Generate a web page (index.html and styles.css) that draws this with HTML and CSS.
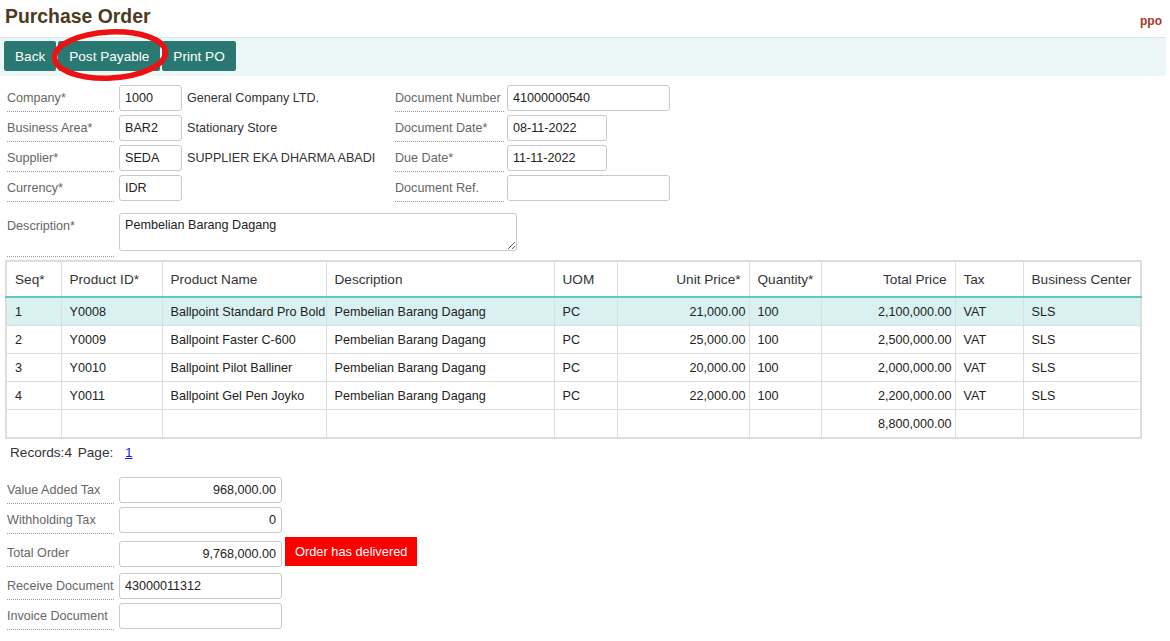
FILE: index.html
```html
<!DOCTYPE html>
<html>
<head>
<meta charset="utf-8">
<title>Purchase Order</title>
<link rel="stylesheet" href="styles.css">
</head>
<body>
<header class="page-head">
  <h1 class="title">Purchase Order</h1>
  <span class="user">ppo</span>
</header>

<div class="toolbar">
  <button class="btn">Back</button>
  <button class="btn">Post Payable</button>
  <button class="btn">Print PO</button>
  <svg class="mark" width="120" height="52" viewBox="0 0 120 52" aria-hidden="true">
    <ellipse cx="60" cy="26" rx="55.5" ry="23" fill="none" stroke="#ee1111" stroke-width="5.5" transform="rotate(-3 60 26)"/>
  </svg>
</div>

<section class="head-form">
  <div class="cols">
    <div class="col col-left">
      <div class="row"><label class="lbl">Company*</label><input class="inp w-code" value="1000" readonly><span class="desc">General Company LTD.</span></div>
      <div class="row"><label class="lbl">Business Area*</label><input class="inp w-code" value="BAR2" readonly><span class="desc">Stationary Store</span></div>
      <div class="row"><label class="lbl">Supplier*</label><input class="inp w-code" value="SEDA" readonly><span class="desc">SUPPLIER EKA DHARMA ABADI</span></div>
      <div class="row"><label class="lbl">Currency*</label><input class="inp w-code" value="IDR" readonly></div>
    </div>
    <div class="col col-right">
      <div class="row"><label class="lbl lbl-r">Document Number</label><input class="inp w-long" value="41000000540" readonly></div>
      <div class="row"><label class="lbl lbl-r">Document Date*</label><input class="inp w-date" value="08-11-2022" readonly></div>
      <div class="row"><label class="lbl lbl-r">Due Date*</label><input class="inp w-date" value="11-11-2022" readonly></div>
      <div class="row"><label class="lbl lbl-r">Document Ref.</label><input class="inp w-long" value="" readonly></div>
    </div>
  </div>
  <div class="row row-desc"><label class="lbl lbl-tall">Description*</label><textarea class="ta">Pembelian Barang Dagang</textarea></div>
</section>

<table class="grid">
  <colgroup>
    <col style="width:55px"><col style="width:101px"><col style="width:164px"><col style="width:228px"><col style="width:63px"><col style="width:132px"><col style="width:72px"><col style="width:134px"><col style="width:68px"><col style="width:118px">
  </colgroup>
  <thead>
    <tr><th>Seq*</th><th>Product ID*</th><th>Product Name</th><th>Description</th><th>UOM</th><th class="num">Unit Price*</th><th>Quantity*</th><th class="num">Total Price</th><th>Tax</th><th>Business Center</th></tr>
  </thead>
  <tbody>
    <tr class="sel"><td>1</td><td>Y0008</td><td class="tight">Ballpoint Standard Pro Bold</td><td>Pembelian Barang Dagang</td><td>PC</td><td class="num">21,000.00</td><td>100</td><td class="num">2,100,000.00</td><td>VAT</td><td>SLS</td></tr>
    <tr><td>2</td><td>Y0009</td><td class="tight">Ballpoint Faster C-600</td><td>Pembelian Barang Dagang</td><td>PC</td><td class="num">25,000.00</td><td>100</td><td class="num">2,500,000.00</td><td>VAT</td><td>SLS</td></tr>
    <tr><td>3</td><td>Y0010</td><td class="tight">Ballpoint Pilot Balliner</td><td>Pembelian Barang Dagang</td><td>PC</td><td class="num">20,000.00</td><td>100</td><td class="num">2,000,000.00</td><td>VAT</td><td>SLS</td></tr>
    <tr><td>4</td><td>Y0011</td><td class="tight">Ballpoint Gel Pen Joyko</td><td>Pembelian Barang Dagang</td><td>PC</td><td class="num">22,000.00</td><td>100</td><td class="num">2,200,000.00</td><td>VAT</td><td>SLS</td></tr>
    <tr><td></td><td></td><td></td><td></td><td></td><td></td><td></td><td class="num">8,800,000.00</td><td></td><td></td></tr>
  </tbody>
</table>

<div class="records">Records:4 <span class="pg">Page:</span> <a href="#" class="pg-link">1</a></div>

<section class="foot-form">
  <div class="row"><label class="lbl">Value Added Tax</label><input class="inp w-long right" value="968,000.00" readonly></div>
  <div class="row"><label class="lbl">Withholding Tax</label><input class="inp w-long right" value="0" readonly></div>
  <div class="row row-total"><label class="lbl">Total Order</label><input class="inp w-long right" value="9,768,000.00" readonly><span class="badge">Order has delivered</span></div>
  <div class="row"><label class="lbl">Receive Document</label><input class="inp w-long" value="43000011312" readonly></div>
  <div class="row"><label class="lbl">Invoice Document</label><input class="inp w-long" value="" readonly></div>
</section>
</body>
</html>
```

FILE: styles.css
```css
html, body {
  margin: 0;
  padding: 0;
  background: #ffffff;
}

body {
  font-family: "Liberation Sans", Arial, sans-serif;
  font-size: 12.6px;
  color: #222;
}

.page-head {
  display: flex;
  justify-content: space-between;
  align-items: flex-start;
  height: 37px;
  padding: 0 8px 0 5px;
  box-sizing: border-box;
}

.title {
  margin: 0;
  padding-top: 5px;
  font-size: 19.4px;
  line-height: 22px;
  font-weight: bold;
  color: #4b3b1e;
}

.user {
  padding-top: 14px;
  font-size: 12px;
  line-height: 14px;
  font-weight: bold;
  color: #a8372a;
}

.toolbar {
  position: relative;
  display: flex;
  gap: 2px;
  height: 39px;
  box-sizing: border-box;
  margin-right: 4px;
  padding: 3px 0 0 4px;
  border-top: 1px solid #dde8e8;
  background: #ebf7f7;
  margin-bottom: 9px;
}

.btn {
  height: 30px;
  padding: 0 11px;
  border: none;
  border-radius: 2px;
  background: #2a7872;
  color: #ffffff;
  font-family: "Liberation Sans", Arial, sans-serif;
  font-size: 13.6px;
  cursor: pointer;
}

.mark {
  position: absolute;
  left: 50px;
  top: -9px;
  overflow: visible;
  pointer-events: none;
}

.head-form {
  padding-left: 7px;
}

.cols {
  display: flex;
}

.col {
  display: flex;
  flex-direction: column;
  gap: 3px;
}

.col-left {
  width: 388px;
}

.row {
  display: flex;
  align-items: flex-start;
}

.lbl {
  display: block;
  flex: none;
  width: 107px;
  height: 27px;
  box-sizing: border-box;
  margin-right: 5px;
  padding-top: 5px;
  line-height: 16px;
  font-size: 12.6px;
  color: #666;
  border-bottom: 1px dotted #9a9a9a;
  white-space: nowrap;
}

.lbl-r {
  width: 109px;
  margin-right: 3px;
}

.lbl-tall {
  height: 44px;
}

.inp {
  flex: none;
  height: 26px;
  box-sizing: border-box;
  padding: 0 5px;
  border: 1px solid #c9c9c9;
  border-radius: 3px;
  background: #fff;
  font-family: "Liberation Sans", Arial, sans-serif;
  font-size: 12.6px;
  color: #222;
  outline: none;
}

.w-code { width: 63px; }
.w-date { width: 100px; }
.w-long { width: 163px; }
.right { text-align: right; }

.desc {
  margin-left: 5px;
  padding-top: 5px;
  line-height: 17px;
  font-size: 12.6px;
  color: #333;
}

.row-desc {
  margin-top: 11px;
}

.ta {
  width: 398px;
  height: 38px;
  box-sizing: border-box;
  padding: 4px 5px;
  border: 1px solid #c9c9c9;
  border-radius: 3px;
  font-family: "Liberation Sans", Arial, sans-serif;
  font-size: 12.6px;
  color: #222;
  line-height: 15px;
  outline: none;
}

.grid {
  margin: 3px 0 0 5px;
  width: 1135px;
  table-layout: fixed;
  border-collapse: collapse;
  border: 2px solid #dddddd;
  font-size: 12.6px;
  color: #222;
}

.grid th {
  height: 34px;
  padding: 0 8px;
  border: 1px solid #dddddd;
  border-bottom: 2px solid #5cc8c8;
  font-weight: normal;
  font-size: 13.6px;
  color: #333;
  text-align: left;
  white-space: nowrap;
}

.grid td {
  height: 27px;
  padding: 0 8px;
  border: 1px solid #dddddd;
  white-space: nowrap;
  overflow: hidden;
}

.grid td.tight {
  padding-right: 0;
}

.grid th.num {
  text-align: right;
}

.grid td.num {
  text-align: right;
  padding-right: 3px;
}

.grid tr.sel td {
  background: #d9f1f1;
}

.records {
  margin: 6px 0 0 10px;
  font-size: 13.6px;
  line-height: 16px;
  color: #333;
}

.pg {
  margin-left: 2px;
}

.pg-link {
  margin-left: 8px;
  color: #1a1aee;
}

.foot-form {
  margin-top: 16px;
  padding-left: 7px;
  display: flex;
  flex-direction: column;
  gap: 3px;
}

.row-total {
  align-items: flex-end;
  margin-bottom: 3px;
}

.badge {
  margin: 0 0 1px 3px;
  height: 29px;
  padding: 0 10px;
  background: #ff0000;
  color: #ffffff;
  font-size: 12.8px;
  line-height: 29px;
  white-space: nowrap;
}
```
